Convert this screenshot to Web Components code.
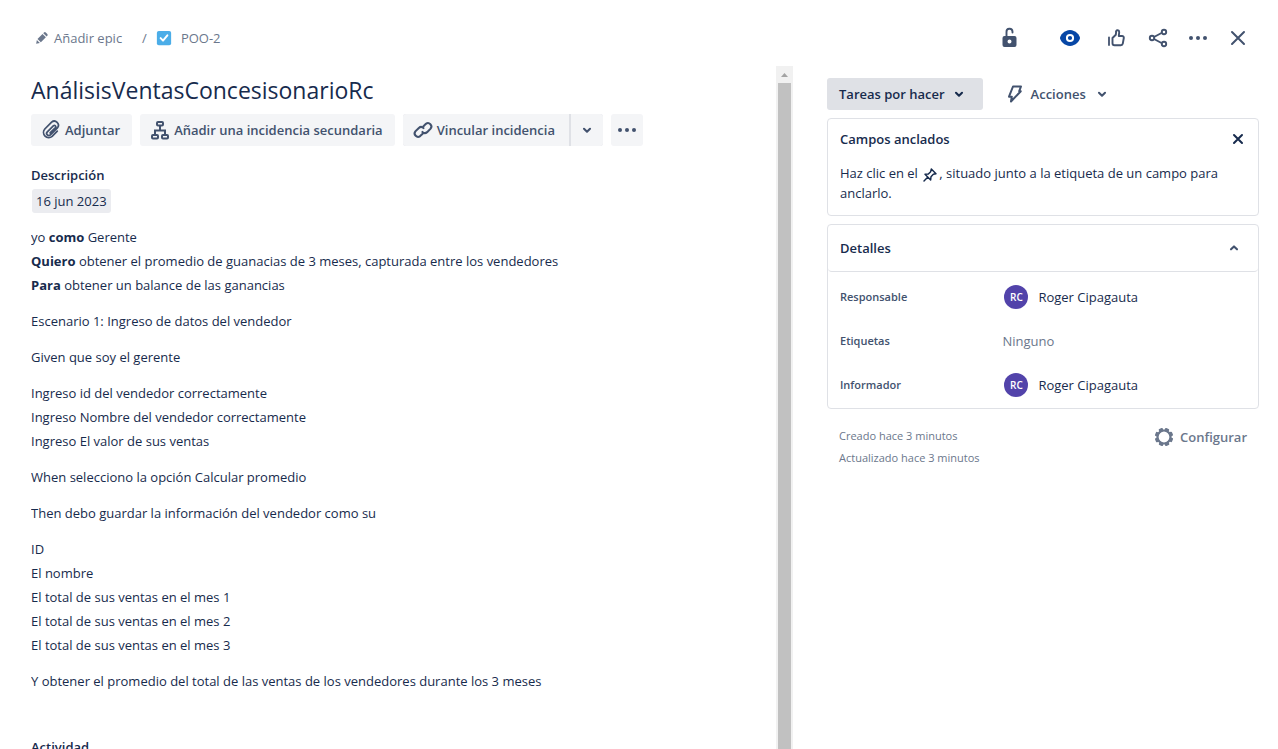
<!DOCTYPE html>
<html lang="es">
<head>
<meta charset="utf-8">
<meta name="viewport" content="width=device-width, initial-scale=1">
<title>POO-2 AnálisisVentasConcesisonarioRc</title>
<style>
  html, body { height: 100%; }
  body {
    margin: 0;
    overflow: hidden;
    background: #fff;
    color: #172b4d;
    font: 400 13px/20px "Open Sans", "Noto Sans", sans-serif;
    --ink: #172b4d;
    --ink-mid: #42526e;
    --ink-soft: #6b778c;
    --line: #dfe1e6;
    --fill: #f4f5f7;
  }
</style>
</head>
<body>
<issue-view></issue-view>

<script>
const define = (name, html, setup) => {
  const template = document.createElement('template');
  template.innerHTML = html;
  customElements.define(name, class extends HTMLElement {
    constructor() {
      super();
      this.attachShadow({ mode: 'open' }).append(template.content.cloneNode(true));
    }
    connectedCallback() { if (setup) setup(this, this.shadowRoot); }
  });
};

const ICONS = {
  pencil: '<path fill="currentColor" d="M5.500 19.500l1-5 4 4zM7.300 13.200l6.700-6.700 4.500 4.500-6.700 6.700zM15 5.500l.9-.9a1.800 1.800 0 0 1 2.500 0l2 2a1.800 1.800 0 0 1 0 2.500l-.9.9z"/>',
  task: '<rect x="2.500" y="2.500" width="19" height="19" rx="2.500" fill="#4bade8"/><path d="M7.500 12.200l3.200 3.300 5.800-7" stroke="#fff" stroke-width="2.600" fill="none" stroke-linecap="round" stroke-linejoin="round"/>',
  unlock: '<path fill="currentColor" fill-rule="evenodd" d="M6.500 10h10a2 2 0 0 1 2 2v7a2 2 0 0 1-2 2h-10a2 2 0 0 1-2-2v-7a2 2 0 0 1 2-2zm5 3.500a2 2 0 1 0 0 4 2 2 0 0 0 0-4z"/><path d="M8.500 11V6a3 3 0 0 1 6-.4v1" fill="none" stroke="currentColor" stroke-width="1.900" stroke-linecap="round"/>',
  eye: '<path fill="currentColor" d="M12 4C6.500 4 2 9.400 2 12s4.500 8 10 8 10-5.400 10-8-4.500-8-10-8z"/><circle cx="12" cy="12" r="3.100" fill="none" stroke="#fff" stroke-width="2"/>',
  like: '<path d="M5 11.500V19" stroke="currentColor" stroke-width="1.800" stroke-linecap="round"/><path d="M8.500 12l3.300-3.200.4-3.600c.1-1.400 3-1.500 3 .9 0 1.500-.4 2.900-.4 3.900h3.200c1.300 0 2 .9 1.800 2l-1 5.500c-.2 1.100-.9 1.700-2 1.700h-6.300c-1.300 0-2-.7-2-2z" fill="none" stroke="currentColor" stroke-width="1.900" stroke-linejoin="round"/>',
  share: '<g fill="none" stroke="currentColor" stroke-width="1.900"><path d="M8 11l7.500-4M8 13l7.500 4"/><circle cx="6" cy="12" r="2.200"/><circle cx="18" cy="6" r="2.200"/><circle cx="18" cy="18" r="2.200"/></g>',
  more: '<g fill="currentColor"><circle cx="5" cy="12" r="2"/><circle cx="12" cy="12" r="2"/><circle cx="19" cy="12" r="2"/></g>',
  close: '<path d="M6 6l12 12m0-12L6 18" stroke="currentColor" stroke-width="2" stroke-linecap="round"/>',
  cross: '<path d="M8 8l8 8m0-8l-8 8" stroke="currentColor" stroke-width="2" stroke-linecap="round"/>',
  clip: '<path d="M11.300 15.900l5.800-5.800a1.500 1.500 0 0 0-2.100-2.100l-6.700 6.700a2.300 2.300 0 0 0 3.300 3.300l7.500-7.500a4.400 4.400 0 0 0-6.200-6.200l-7.300 7.300a5.600 5.600 0 0 0 7.900 7.900l5.500-5.500" transform="translate(.6 .2) scale(.93)" fill="none" stroke="currentColor" stroke-width="1.900" stroke-linecap="round"/>',
  tree: '<g fill="none" stroke="currentColor" stroke-width="2"><rect x="9" y="4" width="6" height="3.500" rx="1"/><rect x="4" y="17" width="6" height="3.500" rx="1"/><rect x="14" y="17" width="6" height="3.500" rx="1"/><path d="M12 7.500V12M7 17v-4.500h10V17"/></g>',
  link: '<g transform="translate(.7 .7) scale(.94)" fill="none" stroke="currentColor" stroke-width="2.200" stroke-linecap="round"><path d="M12.300 8.200l2.800-2.700a3.600 3.600 0 0 1 5 5.100l-3.700 3.700a3.600 3.600 0 0 1-5-.2"/><path d="M11.700 15.900l-2.700 2.600a3.600 3.600 0 0 1-5.100-5l3.700-3.700a3.600 3.600 0 0 1 5 .2"/></g>',
  down: '<path d="M9 10.800l3 2.900 3-2.900" fill="none" stroke="currentColor" stroke-width="2.100" stroke-linecap="round" stroke-linejoin="round"/>',
  up: '<path d="M9 13.300l3-2.900 3 2.900" fill="none" stroke="currentColor" stroke-width="2.100" stroke-linecap="round" stroke-linejoin="round"/>',
  bolt: '<path d="M10 4.500h8l-1.800 4.700h1.600L8 19.500l.8-4.800H6z" fill="none" stroke="currentColor" stroke-width="2" stroke-linejoin="round"/>',
  pin: '<path d="M14 3l7 7-4 1-3.500 3.500-.5 5L4.500 11l5-.5L13 7zM8.500 15.500L3 21" fill="none" stroke="currentColor" stroke-width="2.200" stroke-linejoin="round" stroke-linecap="round"/>',
  gear: '<circle cx="12" cy="12" r="6.500" fill="none" stroke="currentColor" stroke-width="2.200"/><g fill="currentColor">' +
    [22, 67, 112, 157, 202, 247, 292, 337].map(a => `<rect x="9.800" y="2.800" width="4.400" height="3.500" rx="1" transform="rotate(${a} 12 12)"/>`).join('') + '</g>'
};

define('ui-icon', `
  <style>
    :host { display: inline-flex; flex: none; width: var(--icon-size, 24px); height: var(--icon-size, 24px); }
    svg { width: 100%; height: 100%; }
  </style>
  <svg viewBox="0 0 24 24" aria-hidden="true"></svg>`,
  (host, root) => { root.querySelector('svg').innerHTML = ICONS[host.getAttribute('name')]; });

define('ui-button', `
  <style>
    :host { display: inline-flex; }
    button {
      display: flex; align-items: center; justify-content: center; gap: 2px;
      flex: 1; height: 32px; padding: var(--pad, 0 12px 0 8px); border: 0;
      border-radius: var(--radius, 3px); background: var(--bg, var(--fill));
      color: var(--fg, var(--ink-mid)); font: 600 13px/20px "Open Sans", "Noto Sans", sans-serif;
      white-space: nowrap; cursor: pointer;
    }
    :host([kind="icon"]) button { width: 32px; padding: 0; background: none; }
    :host([kind="square"]) button { width: 32px; padding: 0; }
  </style>
  <button type="button"><slot></slot></button>`,
  (host, root) => {
    const label = host.getAttribute('label');
    if (label) root.querySelector('button').setAttribute('aria-label', label);
  });

define('issue-header', `
  <style>
    :host { display: flex; justify-content: space-between; align-items: center; height: 56px; padding: 10px 24px 0 32px; }
    nav, .actions { display: flex; align-items: center; }
    nav { color: var(--ink-soft); }
    nav button { display: flex; align-items: center; gap: 4px; padding: 0; border: 0; background: none; color: inherit; font: inherit; }
    .slash { padding: 0 8px 0 20px; }
    nav ui-icon { --icon-size: 18px; }
    nav > ui-icon { margin-right: 8px; }
    a { color: inherit; text-decoration: none; }
    .actions { gap: 8px; }
    .lock { margin-right: 16px; }
    .watch { width: 40px; --fg: #0747a6; }
    .vote { width: 36px; }
  </style>
  <nav aria-label="Ruta">
    <button type="button"><ui-icon name="pencil"></ui-icon>Añadir epic</button>
    <span class="slash">/</span>
    <ui-icon name="task"></ui-icon>
    <a href="#POO-2">POO-2</a>
  </nav>
  <div class="actions">
    <ui-button class="lock" kind="icon" label="Restricciones"><ui-icon name="unlock"></ui-icon></ui-button>
    <ui-button class="watch" kind="icon" label="Observar"><ui-icon name="eye"></ui-icon></ui-button>
    <ui-button class="vote" kind="icon" label="Votar"><ui-icon name="like"></ui-icon></ui-button>
    <ui-button kind="icon" label="Compartir"><ui-icon name="share"></ui-icon></ui-button>
    <ui-button kind="icon" label="Más"><ui-icon name="more"></ui-icon></ui-button>
    <ui-button kind="icon" label="Cerrar"><ui-icon name="close"></ui-icon></ui-button>
  </div>`);

define('issue-toolbar', `
  <style>
    :host { display: flex; gap: 8px; }
    .split { display: flex; gap: 2px; background: var(--line); border-radius: 3px; }
    .split ui-button:first-child { --radius: 3px 0 0 3px; --pad: 0 14px 0 8px; }
    .split ui-button:last-child { --radius: 0 3px 3px 0; }
  </style>
  <ui-button><ui-icon name="clip"></ui-icon>Adjuntar</ui-button>
  <ui-button><ui-icon name="tree"></ui-icon>Añadir una incidencia secundaria</ui-button>
  <div class="split">
    <ui-button><ui-icon name="link"></ui-icon>Vincular incidencia</ui-button>
    <ui-button kind="square" label="Más vínculos"><ui-icon name="down"></ui-icon></ui-button>
  </div>
  <ui-button kind="square" label="Más acciones"><ui-icon name="more"></ui-icon></ui-button>`);

define('issue-description', `
  <style>
    :host { display: block; }
    h2 { margin: 0; font-size: 13px; line-height: 20px; font-weight: 600; }
    time { display: table; margin: 4px 0 12px 1px; padding: 0 4px; border-radius: 3px; background: #ebecf0; line-height: 24px; color: var(--ink); }
    ::slotted(p) { margin: 0 0 12px; line-height: 24px; }
  </style>
  <h2>Descripción</h2>
  <time datetime="2023-06-16">16 jun 2023</time>
  <slot></slot>`);

define('scroll-rail', `
  <style>
    :host { display: flex; flex-direction: column; width: 17px; background: #f1f1f1; }
    .arrow { display: flex; align-items: center; justify-content: center; height: 17px; }
    .thumb { flex: 1; margin: 0 2px; background: #c1c1c1; }
    svg { width: 7px; height: 4px; }
  </style>
  <div class="arrow"><svg viewBox="0 0 7 4"><path d="M3.500 0L7 4H0z" fill="#a3a3a3"/></svg></div>
  <div class="thumb"></div>`);

define('user-chip', `
  <style>
    :host { display: flex; align-items: center; gap: 10px; padding-left: 2px; }
    .avatar { width: 24px; height: 24px; border-radius: 50%; background: #5243aa; color: #fff; font-size: 10px; line-height: 24px; font-weight: 600; text-align: center; }
  </style>
  <span class="avatar">RC</span><slot></slot>`);

define('field-row', `
  <style>
    :host { display: grid; grid-template-columns: 2fr 3fr; align-items: center; height: 44px; }
    .label { font-size: 11px; line-height: 16px; font-weight: 600; color: var(--ink-mid); }
  </style>
  <span class="label"></span><slot></slot>`,
  (host, root) => { root.querySelector('.label').textContent = host.getAttribute('label'); });

define('side-panel', `
  <style>
    :host { display: flex; flex-direction: column; gap: 8px; padding-top: 12px; }
    .row, header { display: flex; align-items: center; justify-content: space-between; }
    .row { justify-content: flex-start; gap: 12px; }
    .status { --bg: #dfe1e6; --fg: var(--ink); --pad: 0 12px; }
    .acts { --bg: none; --pad: 0 8px; }
    .acts ui-icon:first-child { margin-right: 2px; }
    .acts ui-icon:last-child { margin-left: 2px; }
    section { border: 1px solid var(--line); border-radius: 4px; }
    h2 { margin: 0; font-size: 13px; line-height: 20px; font-weight: 600; }
    .pinned { padding: 4px 4px 12px 12px; }
    .pinned p { margin: 8px 0 0; }
    .pinned p ui-icon { --icon-size: 16px; margin: 0 1px; vertical-align: middle; }
    .pinned header ui-button { --fg: var(--ink); }
    .details header { height: 46px; padding: 0 8px 0 12px; border-bottom: 1px solid var(--line); border-radius: 4px; }
    .fields { padding: 3px 12px 1px; }
    .none { color: var(--ink-soft); }
    user-chip { color: var(--ink); }
    footer { display: flex; justify-content: space-between; align-items: flex-start; padding: 8px 12px; color: var(--ink-soft); }
    footer p { margin: 0; font-size: 11px; line-height: 22px; }
    footer ui-button { --bg: none; --fg: var(--ink-soft); --pad: 0; margin-top: -4px; }
    footer ui-button ui-icon { margin-right: 2px; }
  </style>
  <div class="row">
    <ui-button class="status">Tareas por hacer<ui-icon name="down"></ui-icon></ui-button>
    <ui-button class="acts"><ui-icon name="bolt"></ui-icon>Acciones<ui-icon name="down"></ui-icon></ui-button>
  </div>
  <section class="pinned">
    <header><h2>Campos anclados</h2><ui-button kind="icon" label="Descartar"><ui-icon name="cross"></ui-icon></ui-button></header>
    <p>Haz clic en el <ui-icon name="pin"></ui-icon>, situado junto a la etiqueta de un campo para <span>anclarlo.</span></p>
  </section>
  <section class="details">
    <header><h2>Detalles</h2><ui-button kind="icon" label="Contraer"><ui-icon name="up"></ui-icon></ui-button></header>
    <div class="fields">
      <field-row label="Responsable"><user-chip>Roger Cipagauta</user-chip></field-row>
      <field-row label="Etiquetas"><span class="none">Ninguno</span></field-row>
      <field-row label="Informador"><user-chip>Roger Cipagauta</user-chip></field-row>
    </div>
  </section>
  <footer>
    <div><p>Creado hace 3 minutos</p><p>Actualizado hace 3 minutos</p></div>
    <ui-button><ui-icon name="gear"></ui-icon>Configurar</ui-button>
  </footer>`);

define('issue-view', `
  <style>
    :host { display: flex; flex-direction: column; height: 100vh; }
    .columns { flex: 1; min-height: 0; display: grid; grid-template-columns: 127fr 72fr; grid-template-rows: 100%; column-gap: 34px; padding: 0 19px 0 31px; }
    .left { display: flex; min-width: 0; }
    main { flex: 1; min-width: 0; overflow: hidden; }
    h1 { margin: 8px 0; font-size: 23px; line-height: 32px; font-weight: 500; }
    issue-description { margin-top: 19px; }
    .activity { margin: 44px 0 0; font-size: 13px; line-height: 20px; font-weight: 600; }
  </style>
  <issue-header></issue-header>
  <div class="columns">
    <div class="left">
      <main>
        <h1>AnálisisVentasConcesisonarioRc</h1>
        <issue-toolbar></issue-toolbar>
        <issue-description>
          <p>yo <strong>como</strong> Gerente<br><strong>Quiero</strong> obtener el promedio de guanacias de 3 meses, capturada entre los vendedores<br><strong>Para</strong> obtener un balance de las ganancias</p>
          <p>Escenario 1: Ingreso de datos del vendedor</p>
          <p>Given que soy el gerente</p>
          <p>Ingreso id del vendedor correctamente<br>Ingreso Nombre del vendedor correctamente<br>Ingreso El valor de sus ventas</p>
          <p>When selecciono la opción Calcular promedio</p>
          <p>Then debo guardar la información del vendedor como su</p>
          <p>ID<br>El nombre<br>El total de sus ventas en el mes 1<br>El total de sus ventas en el mes 2<br>El total de sus ventas en el mes 3</p>
          <p>Y obtener el promedio del total de las ventas de los vendedores durante los 3 meses</p>
        </issue-description>
        <h2 class="activity">Actividad</h2>
      </main>
      <scroll-rail></scroll-rail>
    </div>
    <side-panel></side-panel>
  </div>`);
</script>
</body>
</html>
